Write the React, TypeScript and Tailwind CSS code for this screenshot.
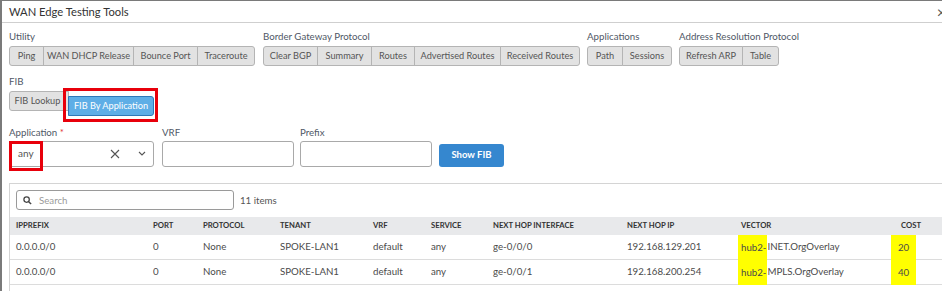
import React from "react";

type B = [string, string];

const Group = ({ label, items, w }: { label: string; items: B[]; w: string }) => (
  <div className={"flex flex-col shrink-0 " + w}>
    <div className="text-[9.7px] leading-[14px] text-[#4f5866] h-[15px] whitespace-nowrap">{label}</div>
    <div className="flex mt-[2px]">
      {items.map(([t, wc], i) => (
        <button
          key={t}
          className={
            wc +
            " shrink-0 h-[20px] text-[9.2px] leading-none text-[#555] bg-[#e2e2e2] border border-[#b4b4b4] whitespace-nowrap " +
            (i === 0 ? "rounded-l-[3px] " : "-ml-px ") +
            (i === items.length - 1 ? "rounded-r-[3px]" : "")
          }
        >
          {t}
        </button>
      ))}
    </div>
  </div>
);

const cols = [
  "w-[137px]",
  "w-[50px]",
  "w-[77px]",
  "w-[93px]",
  "w-[58px]",
  "w-[62px]",
  "w-[134px]",
  "w-[114px]",
  "w-[160px]",
  "w-[60px]",
];
const heads = ["IPPREFIX", "PORT", "PROTOCOL", "TENANT", "VRF", "SERVICE", "NEXT HOP INTERFACE", "NEXT HOP IP", "VECTOR", "COST"];

const rows = [
  ["0.0.0.0/0", "0", "None", "SPOKE-LAN1", "default", "any", "ge-0/0/0", "192.168.129.201", "INET.OrgOverlay", "20"],
  ["0.0.0.0/0", "0", "None", "SPOKE-LAN1", "default", "any", "ge-0/0/1", "192.168.200.254", "MPLS.OrgOverlay", "40"],
  ["10.99.99.0/24", "0", "None", "SPOKE-LAN1", "default", "any", "None", "None", "", ""],
];

export default function App() {
  return (
    <div
      className="w-[942px] h-[291px] overflow-hidden bg-white border-t border-l-2 border-[#7a7a7a] flex flex-col"
      style={{ fontFamily: 'Lato, "Open Sans", sans-serif' }}
    >
      {/* Header */}
      <div className="h-[22px] shrink-0 border-b border-[#cfcfcf] flex items-center justify-between pl-[7px]">
        <span className="text-[11.2px] text-[#333] leading-none">WAN Edge Testing Tools</span>
        <span className="text-[16px] text-[#555] leading-none -mr-[4px]">×</span>
      </div>

      <div className="pl-[7px] flex flex-col">
        {/* Tool groups */}
        <div className="flex mt-[6px]">
          <Group
            w="w-[254px]"
            label="Utility"
            items={[
              ["Ping", "w-[35px]"],
              ["WAN DHCP Release", "w-[91px]"],
              ["Bounce Port", "w-[65px]"],
              ["Traceroute", "w-[58px]"],
            ]}
          />
          <Group
            w="w-[324px]"
            label="Border Gateway Protocol"
            items={[
              ["Clear BGP", "w-[55px]"],
              ["Summary", "w-[55px]"],
              ["Routes", "w-[44px]"],
              ["Advertised Routes", "w-[87px]"],
              ["Received Routes", "w-[80px]"],
            ]}
          />
          <Group
            w="w-[92px]"
            label="Applications"
            items={[
              ["Path", "w-[36px]"],
              ["Sessions", "w-[50px]"],
            ]}
          />
          <Group
            w="w-[130px]"
            label="Address Resolution Protocol"
            items={[
              ["Refresh ARP", "w-[64px]"],
              ["Table", "w-[37px]"],
            ]}
          />
        </div>

        {/* FIB */}
        <div className="flex flex-col mt-[8px]">
          <div className="text-[9.7px] leading-[14px] text-[#4f5866] h-[15px]">FIB</div>
          <div className="flex mt-[2px]">
            <button className="h-[20px] w-[60px] pr-[3px] text-[9.2px] leading-none text-[#555] bg-[#e2e2e2] border border-[#b4b4b4] rounded-l-[3px] whitespace-nowrap">
              FIB Lookup
            </button>
            <div className="relative">
              <button className="h-[20px] w-[86px] -ml-px text-[9.2px] leading-none text-white bg-[#5eaee6] border border-[#2f79b8] rounded-r-[3px] whitespace-nowrap">
                FIB By Application
              </button>
              <span className="absolute -left-[6px] -right-[4px] -top-[3px] -bottom-[6px] border-[3px] border-[#e8000b]" />
            </div>
          </div>
        </div>

        {/* Form */}
        <div className="flex items-end mt-[9px]">
          <div className="flex flex-col">
            <div className="text-[9.7px] leading-[14px] text-[#4f5866] h-[15px]">
              Application <span className="text-[#e23b3b]">*</span>
            </div>
            <div className="relative mt-[1px] w-[145px] h-[26px] border border-[#a9a9a9] rounded-[3px] flex items-center pl-[8px]">
              <span className="text-[10px] text-[#555]">any</span>
              <svg className="ml-auto mr-[2px]" width="10" height="10" viewBox="0 0 10 10">
                <path d="M1 1 L9 9 M9 1 L1 9" stroke="#555" strokeWidth="1.1" />
              </svg>
              <svg className="ml-[16px] mr-[7px]" width="8" height="5" viewBox="0 0 8 5">
                <path d="M1 1 L4 4 L7 1" stroke="#555" strokeWidth="1.1" fill="none" />
              </svg>
              <span className="absolute -left-px -top-px w-[34px] h-[30px] border-[3px] border-[#e8000b]" />
            </div>
          </div>
          <div className="flex flex-col ml-[8px]">
            <div className="text-[9.7px] leading-[14px] text-[#4f5866] h-[15px]">VRF</div>
            <div className="mt-[1px] w-[132px] h-[26px] border border-[#a9a9a9] rounded-[3px]" />
          </div>
          <div className="flex flex-col ml-[6px]">
            <div className="text-[9.7px] leading-[14px] text-[#4f5866] h-[15px]">Prefix</div>
            <div className="mt-[1px] w-[132px] h-[26px] border border-[#a9a9a9] rounded-[3px]" />
          </div>
          <button className="ml-[7px] w-[65px] h-[23px] rounded-[3px] bg-[#3587cf] text-white text-[9.5px] font-bold">
            Show FIB
          </button>
        </div>

        {/* Table container */}
        <div className="mt-[16px] border-t border-l border-[#d4d4d4] flex flex-col">
          <div className="flex items-center h-[33px] pl-[6px]">
            <div className="w-[218px] h-[20px] border border-[#9a9a9a] rounded-[3px] flex items-center pl-[6px]">
              <svg width="9" height="9" viewBox="0 0 10 10">
                <circle cx="4" cy="4" r="3" stroke="#444" strokeWidth="1.4" fill="none" />
                <path d="M6.3 6.3 L9 9" stroke="#444" strokeWidth="1.6" />
              </svg>
              <span className="ml-[7px] text-[9.7px] text-[#9a9a9a]">Search</span>
            </div>
            <span className="ml-[6px] text-[9.7px] text-[#555]">11 items</span>
          </div>

          <div className="flex h-[18px] bg-[#e8e9eb] items-center pl-[6px]">
            {heads.map((h, i) => (
              <div key={h} className={cols[i] + " shrink-0 text-[7.7px] font-bold text-[#333] leading-none"}>
                {h}
              </div>
            ))}
          </div>

          {rows.map((r, ri) => (
            <div key={ri} className="flex h-[25px] border-b border-[#dcdcdc] pl-[6px] text-[9.7px] text-[#4a4a4a]">
              {r.map((c, ci) => {
                if (ci === 8 && c) {
                  return (
                    <div key={ci} className={cols[ci] + " shrink-0 flex -ml-[3px]"}>
                      <span className="bg-[#ffff00] flex items-center pl-[3px] pr-px -mb-px">hub2-</span>
                      <span className="flex items-center">{c}</span>
                    </div>
                  );
                }
                if (ci === 9 && c) {
                  return (
                    <div key={ci} className={cols[ci] + " shrink-0 flex -ml-[7px]"}>
                      <span className="bg-[#ffff00] w-[25px] flex items-center pl-[7px] -mb-px">{c}</span>
                    </div>
                  );
                }
                return (
                  <div key={ci} className={cols[ci] + " shrink-0 flex items-center whitespace-nowrap"}>
                    {c}
                  </div>
                );
              })}
            </div>
          ))}
        </div>
      </div>
    </div>
  );
}
